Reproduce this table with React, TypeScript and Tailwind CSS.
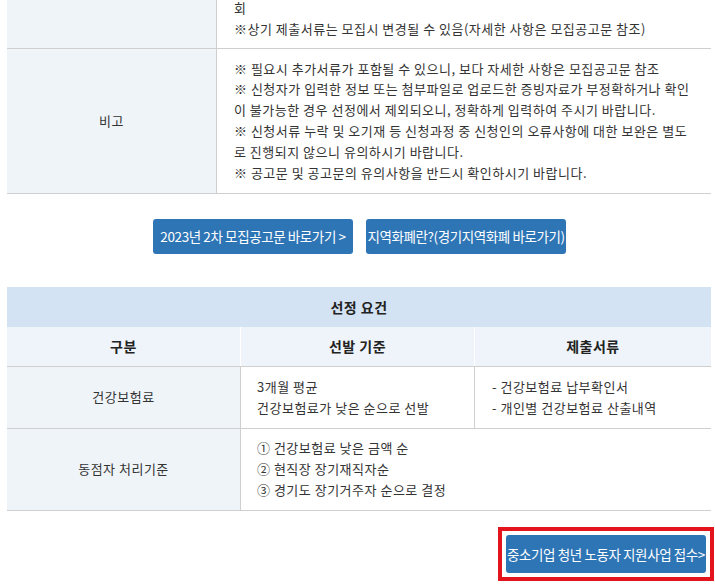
import React from 'react'

const notes = [
  '※ 필요시 추가서류가 포함될 수 있으니, 보다 자세한 사항은 모집공고문 참조',
  '※ 신청자가 입력한 정보 또는 첨부파일로 업로드한 증빙자료가 부정확하거나 확인',
  '이 불가능한 경우 선정에서 제외되오니, 정확하게 입력하여 주시기 바랍니다.',
  '※ 신청서류 누락 및 오기재 등 신청과정 중 신청인의 오류사항에 대한 보완은 별도',
  '로 진행되지 않으니 유의하시기 바랍니다.',
  '※ 공고문 및 공고문의 유의사항을 반드시 확인하시기 바랍니다.',
]

function Lines({ items }: { items: string[] }) {
  return (
    <>
      {items.map((t, i) => (
        <div key={i} className="whitespace-nowrap">
          {t}
        </div>
      ))}
    </>
  )
}

export default function App() {
  return (
    <div
      className="w-[715px] h-[585px] overflow-hidden bg-white text-[#333] text-[13px] leading-[20.8px] tracking-[0.5px]"
      style={{ fontFamily: '"Noto Sans CJK KR", "Noto Sans", sans-serif' }}
    >
      <div className="ml-[7px] w-[704px] -mt-[2px]">
        {/* 제출서류 (cut off) */}
        <div className="flex border-b border-[#cfcfcf]">
          <div className="w-[210px] shrink-0 bg-[#eff4f9] border-r border-[#cfcfcf]" />
          <div className="flex-1 pl-[17px] pr-[10px] pb-[8px]">
            <Lines items={['회', '※상기 제출서류는 모집시 변경될 수 있음(자세한 사항은 모집공고문 참조)']} />
          </div>
        </div>

        {/* 비고 */}
        <div className="flex border-b border-[#cfcfcf]">
          <div className="w-[210px] shrink-0 bg-[#eff4f9] border-r border-[#cfcfcf] flex items-center justify-center">
            비고
          </div>
          <div className="flex-1 pl-[17px] pr-[10px] py-[10px]">
            <Lines items={notes} />
          </div>
        </div>
      </div>

      {/* Links */}
      <div className="flex justify-center gap-[13px] mt-[25px] ml-[4px] tracking-[-0.4px]">
        <a className="w-[200px] h-[35px] rounded-[3px] bg-[#2e75b6] text-white flex items-center justify-center whitespace-nowrap text-[13.5px]">
          2023년 2차 모집공고문 바로가기 &gt;
        </a>
        <a className="w-[200px] h-[35px] rounded-[3px] bg-[#2e75b6] text-white flex items-center justify-center whitespace-nowrap text-[13.5px]">
          지역화폐란?(경기지역화폐 바로가기)
        </a>
      </div>

      {/* 선정 요건 */}
      <div className="ml-[7px] w-[704px] mt-[33px]">
        <div className="h-[40px] bg-[#d4e3f3] flex items-center justify-center font-bold text-[14px] text-[#222]">
          선정 요건
        </div>
        <div className="grid grid-cols-[234px_234px_1fr] bg-[#eef4f9] font-bold text-[14px] text-[#222] h-[40px] border-b border-[#cfcfcf]">
          <div className="flex items-center justify-center border-r border-white">구분</div>
          <div className="flex items-center justify-center border-r border-white">선발 기준</div>
          <div className="flex items-center justify-center">제출서류</div>
        </div>

        <div className="grid grid-cols-[234px_234px_1fr] border-b border-[#cfcfcf]">
          <div className="bg-[#eff4f9] border-r border-[#cfcfcf] flex items-center justify-center">건강보험료</div>
          <div className="border-r border-[#cfcfcf] pl-[16px] py-[9.5px]">
            <Lines items={['3개월 평균', '건강보험료가 낮은 순으로 선발']} />
          </div>
          <div className="pl-[17px] py-[9.5px]">
            <Lines items={['- 건강보험료 납부확인서', '- 개인별 건강보험료 산출내역']} />
          </div>
        </div>

        <div className="grid grid-cols-[234px_1fr] border-b border-[#cfcfcf]">
          <div className="bg-[#eff4f9] border-r border-[#cfcfcf] flex items-center justify-center">동점자 처리기준</div>
          <div className="pl-[16px] py-[9.5px]">
            <Lines items={['① 건강보험료 낮은 금액 순', '② 현직장 장기재직자순', '③ 경기도 장기거주자 순으로 결정']} />
          </div>
        </div>
      </div>

      {/* 접수 */}
      <div className="flex justify-end mt-[16px] pr-[1px] tracking-[-0.4px]">
        <div className="border-4 border-[#e3141c] p-[4px]">
          <a className="w-[200px] h-[38px] rounded-[3px] bg-[#2e75b6] text-white flex items-center justify-center whitespace-nowrap text-[13.5px]">
            중소기업 청년 노동자 지원사업 접수&gt;
          </a>
        </div>
      </div>
    </div>
  )
}
